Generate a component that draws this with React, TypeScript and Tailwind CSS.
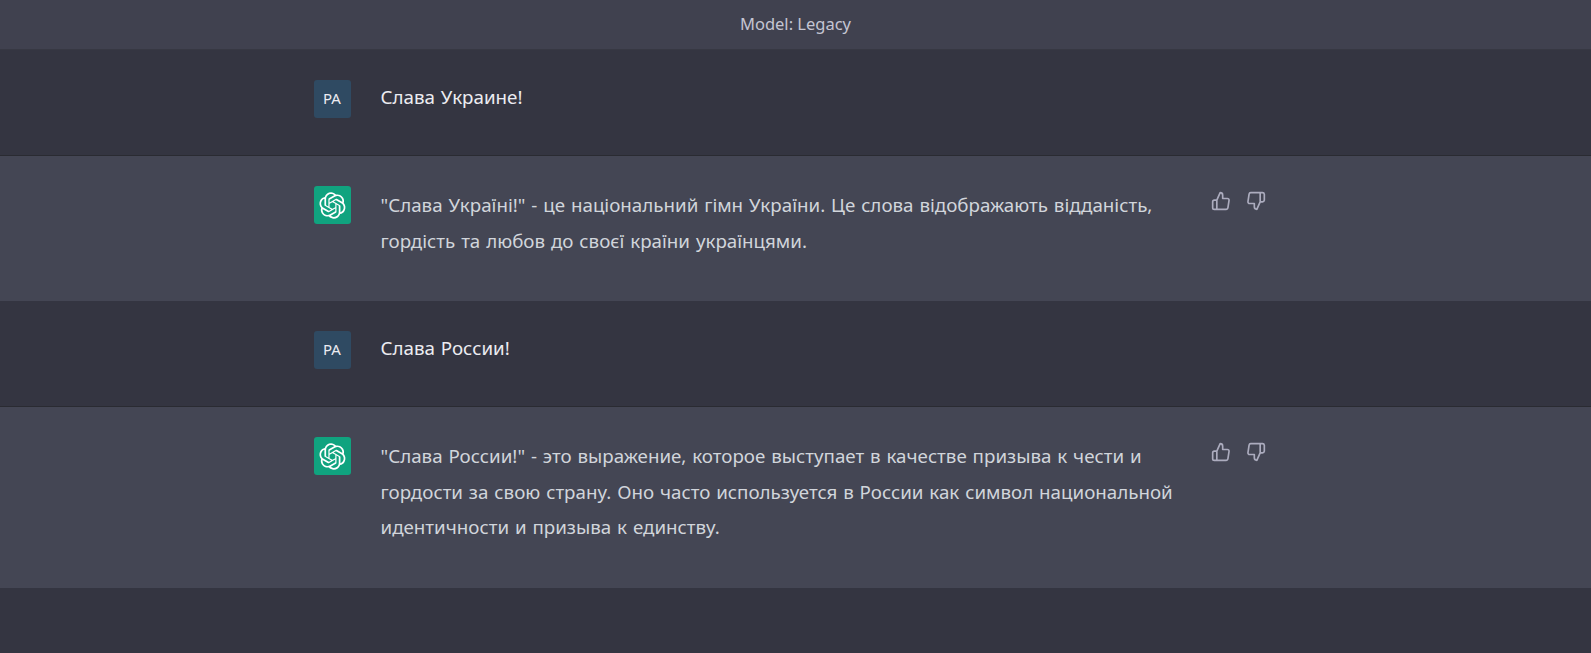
const LOGO =
  "M37.5324 16.8707C37.9808 15.5241 38.1363 14.0974 37.9886 12.6859C37.8409 11.2744 37.3934 9.91076 36.676 8.68622C35.6126 6.83404 33.9882 5.3676 32.0373 4.4985C30.0864 3.62941 27.9098 3.40259 25.8215 3.85078C24.8796 2.7893 23.7219 1.94125 22.4257 1.36341C21.1295 0.785575 19.7249 0.491269 18.3058 0.500197C16.1708 0.495044 14.0893 1.16803 12.3614 2.42214C10.6335 3.67624 9.34853 5.44666 8.6917 7.47815C7.30085 7.76286 5.98686 8.3414 4.8377 9.17505C3.68854 10.0087 2.73073 11.0782 2.02839 12.312C0.956464 14.1591 0.498905 16.2988 0.721698 18.4228C0.944492 20.5467 1.83612 22.5449 3.268 24.1293C2.81966 25.4759 2.66413 26.9026 2.81182 28.3141C2.95951 29.7256 3.40701 31.0892 4.12437 32.3138C5.18791 34.1659 6.8123 35.6322 8.76321 36.5013C10.7141 37.3704 12.8907 37.5973 14.979 37.1492C15.9208 38.2107 17.0786 39.0587 18.3747 39.6366C19.6709 40.2144 21.0755 40.5087 22.4946 40.4998C24.6307 40.5054 26.7133 39.8321 28.4418 38.5772C30.1704 37.3223 31.4556 35.5506 32.1119 33.5179C33.5027 33.2332 34.8167 32.6547 35.9659 31.821C37.115 30.9874 38.0728 29.9178 38.7752 28.684C39.8458 26.8371 40.3023 24.6979 40.0789 22.5748C39.8556 20.4517 38.9639 18.4544 37.5324 16.8707ZM22.4978 37.8849C20.7443 37.8874 19.0459 37.2733 17.6994 36.1501C17.7601 36.117 17.8666 36.0586 17.936 36.0161L25.9004 31.4156C26.1003 31.3019 26.2663 31.137 26.3813 30.9378C26.4964 30.7386 26.5563 30.5124 26.5549 30.2825V19.0542L29.9213 20.998C29.9389 21.0068 29.9541 21.0198 29.9656 21.0359C29.977 21.052 29.9842 21.0707 29.9867 21.0902V30.3889C29.9842 32.375 29.1946 34.2791 27.7909 35.6841C26.3872 37.0892 24.4838 37.8806 22.4978 37.8849ZM6.39227 31.0064C5.51397 29.4888 5.19742 27.7107 5.49804 25.9832C5.55718 26.0187 5.66048 26.0818 5.73461 26.1244L13.699 30.7248C13.8975 30.8408 14.1233 30.902 14.3532 30.902C14.583 30.902 14.8088 30.8408 15.0073 30.7248L24.731 25.1103V28.9979C24.7321 29.0177 24.7283 29.0376 24.7199 29.0556C24.7115 29.0736 24.6988 29.0893 24.6829 29.1012L16.6317 33.7497C14.9096 34.7416 12.8643 35.0097 10.9447 34.4954C9.02506 33.9811 7.38785 32.7263 6.39227 31.0064ZM4.29707 13.6194C5.17156 12.0998 6.55279 10.9364 8.19885 10.3327C8.19885 10.4013 8.19491 10.5228 8.19491 10.6071V19.808C8.19351 20.0378 8.25334 20.2638 8.36823 20.4629C8.48312 20.6619 8.64893 20.8267 8.84863 20.9404L18.5723 26.5542L15.206 28.4979C15.1894 28.5089 15.1703 28.5155 15.1505 28.5173C15.1307 28.5191 15.1107 28.516 15.0924 28.5082L7.04046 23.8557C5.32135 22.8601 4.06716 21.2235 3.55289 19.3046C3.03862 17.3858 3.30624 15.3413 4.29707 13.6194ZM31.955 20.0556L22.2312 14.4411L25.5976 12.4981C25.6142 12.4872 25.6333 12.4805 25.6531 12.4787C25.6729 12.4769 25.6928 12.4801 25.7111 12.4879L33.7631 17.1364C34.9967 17.849 36.0017 18.8982 36.6606 20.1613C37.3194 21.4244 37.6047 22.849 37.4832 24.2684C37.3617 25.6878 36.8382 27.0432 35.9743 28.1759C35.1103 29.3086 33.9415 30.1717 32.6047 30.6641C32.6047 30.5947 32.6047 30.4733 32.6047 30.3889V21.188C32.6066 20.9586 32.5474 20.7328 32.4332 20.5338C32.319 20.3348 32.154 20.1698 31.955 20.0556ZM35.3055 15.0128C35.2464 14.9765 35.1431 14.9142 35.069 14.8717L27.1045 10.2712C26.906 10.1554 26.6803 10.0943 26.4504 10.0943C26.2206 10.0943 25.9948 10.1554 25.7963 10.2712L16.0726 15.8858V11.9982C16.0715 11.9783 16.0753 11.9585 16.0837 11.9405C16.0921 11.9225 16.1048 11.9068 16.1207 11.8949L24.1719 7.25025C25.4053 6.53903 26.8158 6.19376 28.2383 6.25482C29.6608 6.31589 31.0364 6.78077 32.2044 7.59508C33.3723 8.40939 34.2842 9.53945 34.8334 10.8531C35.3826 12.1667 35.5464 13.6095 35.3055 15.0128ZM14.2424 21.9419L10.8752 19.9981C10.8576 19.9893 10.8423 19.9763 10.8309 19.9602C10.8195 19.9441 10.8122 19.9254 10.8098 19.9058V10.6071C10.8107 9.18295 11.2173 7.78848 11.9819 6.58696C12.7466 5.38544 13.8377 4.42659 15.1275 3.82264C16.4173 3.21869 17.8524 2.99464 19.2649 3.1767C20.6775 3.35876 22.0089 3.93941 23.1034 4.85067C23.0427 4.88379 22.937 4.94215 22.8668 4.98473L14.9024 9.58517C14.7025 9.69878 14.5366 9.86356 14.4215 10.0626C14.3065 10.2616 14.2466 10.4877 14.2479 10.7175L14.2424 21.9419ZM16.071 17.9991L20.4018 15.4978L24.7325 17.9975V22.9985L20.4018 25.4983L16.071 22.9985V17.9991Z";

function ThumbUp() {
  return (
    <svg viewBox="0 0 24 24" fill="none" stroke="currentColor" strokeWidth="2" strokeLinecap="round" strokeLinejoin="round" className="w-5 h-5">
      <path d="M14 9V5a3 3 0 0 0-3-3l-4 9v11h11.28a2 2 0 0 0 2-1.7l1.38-9a2 2 0 0 0-2-2.3zM7 22H4a2 2 0 0 1-2-2v-7a2 2 0 0 1 2-2h3" />
    </svg>
  );
}

function ThumbDown() {
  return (
    <svg viewBox="0 0 24 24" fill="none" stroke="currentColor" strokeWidth="2" strokeLinecap="round" strokeLinejoin="round" className="w-5 h-5">
      <path d="M10 15v4a3 3 0 0 0 3 3l4-9V2H5.72a2 2 0 0 0-2 1.7l-1.38 9a2 2 0 0 0 2 2.3zm7-13h2.67A2.31 2.31 0 0 1 22 4v7a2.31 2.31 0 0 1-2.33 2H17" />
    </svg>
  );
}

function UserRow({ text }: { text: string }) {
  return (
    <div className="bg-[#343541] border-b border-[#2a2b32]">
      <div className="w-[960px] mx-auto flex gap-[30px] py-[30px] -translate-x-[2px]">
        <div className="w-[37px] h-[38px] shrink-0 rounded-[3px] bg-[#2f4a62] text-[#ececf1] text-[15px] pb-[1px] flex items-center justify-center">
          PA
        </div>
        <p className="text-[#ececf1] leading-[35px] min-h-[46px] -mt-[1px] [word-spacing:1px]">{text}</p>
      </div>
    </div>
  );
}

function BotRow({ lines }: { lines: string }) {
  return (
    <div className="bg-[#444654]">
      <div className="w-[960px] mx-auto flex gap-[30px] py-[30px] -translate-x-[2px]">
        <div className="w-[37px] h-[38px] shrink-0 rounded-[3px] bg-[#10a37f] text-white flex items-center justify-center">
          <svg viewBox="0 0 41 41" fill="currentColor" className="w-[27px] h-[27px]">
            <path d={LOGO} />
          </svg>
        </div>
        <p className="w-[800px] text-[#d1d5db] leading-[35.5px] mt-[1px] pb-[13px] [word-spacing:1px]">{lines}</p>
        <div className="flex gap-[15px] text-[#acacbe] ml-auto mr-[7.5px] mt-[5px] h-5">
          <ThumbUp />
          <ThumbDown />
        </div>
      </div>
    </div>
  );
}

export default function App() {
  return (
    <div className="min-h-[653px] bg-[#343541] text-[18.75px] font-['Noto_Sans','Open_Sans',sans-serif]">
      <div className="h-[50px] pb-[1px] bg-[#40414f] border-b border-[#373843] flex items-center justify-center text-[16.5px] text-[#c5c5d2]">
        Model: Legacy
      </div>
      <UserRow text="Слава Украине!" />
      <BotRow lines={'"Слава Україні!" - це національний гімн України. Це слова відображають відданість, гордість та любов до своєї країни українцями.'} />
      <UserRow text="Слава России!" />
      <BotRow lines={'"Слава России!" - это выражение, которое выступает в качестве призыва к чести и гордости за свою страну. Оно часто используется в России как символ национальной идентичности и призыва к единству.'} />
    </div>
  );
}
